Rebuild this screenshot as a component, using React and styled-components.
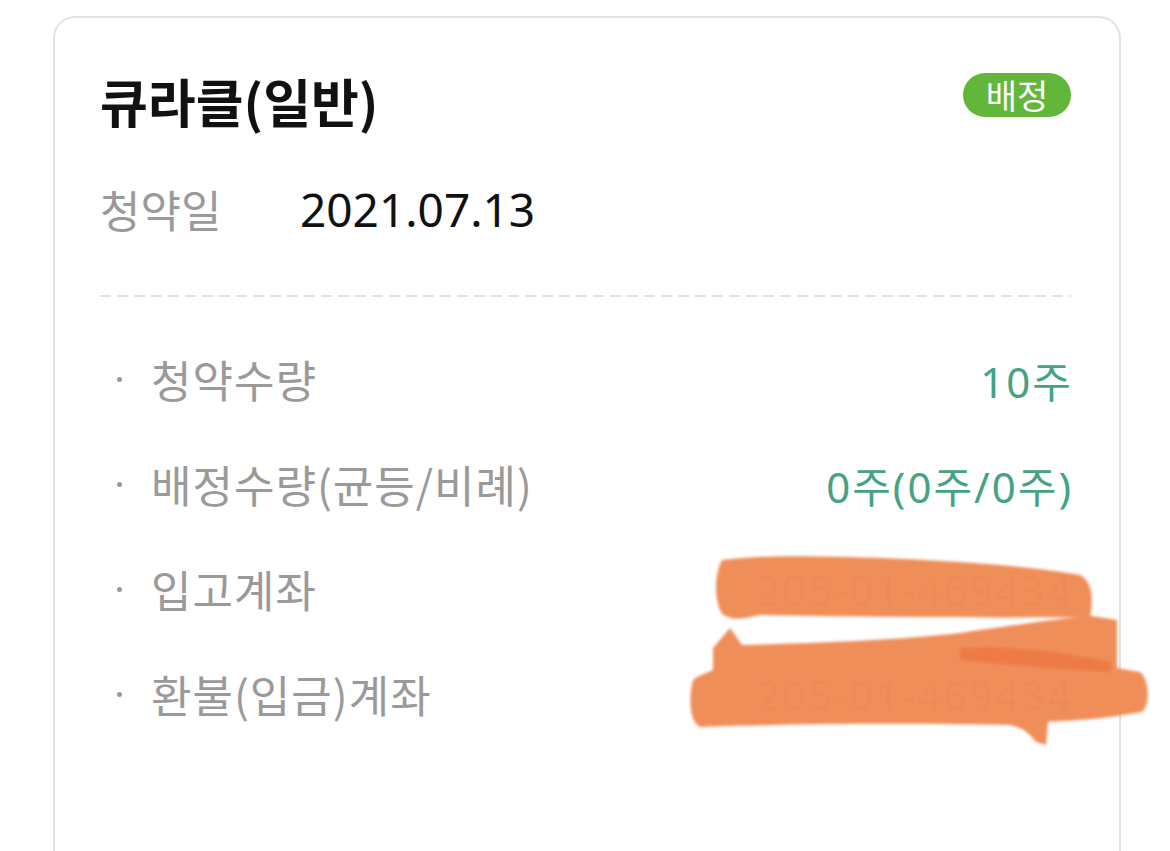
import React from "react";
import styled, { createGlobalStyle } from "styled-components";

const Global = createGlobalStyle`
  html, body { margin: 0; padding: 0; background: #ffffff; }
  body { font-family: "Noto Sans", "Noto Sans CJK KR", sans-serif; overflow: hidden; }
`;

const Page = styled.div`
  padding: 16px 49px 0 53px;
  height: 851px;
  box-sizing: border-box;
  overflow: hidden;
`;

const Card = styled.section`
  position: relative;
  border: 2px solid #e2e2e2;
  border-bottom: none;
  border-radius: 22px 22px 0 0;
  min-height: 900px;
  padding: 51px 48px 0 45px;
  box-sizing: border-box;
`;

const Header = styled.div`
  display: flex;
  justify-content: space-between;
  align-items: flex-start;
`;

const Title = styled.h1`
  margin: 0;
  font-family: "Noto Sans CJK KR", sans-serif;
  font-weight: 700;
  font-size: 52px;
  line-height: 64px;
  color: #111;
`;

const Badge = styled.span`
  margin-top: 4px;
  display: inline-flex;
  align-items: center;
  justify-content: center;
  width: 108px;
  height: 44px;
  border-radius: 22px;
  background: #62b73a;
  color: #fff;
  font-family: "Noto Sans CJK KR", sans-serif;
  font-size: 34px;
  line-height: 1;
`;

const DateRow = styled.div`
  display: flex;
  align-items: center;
  margin-top: 46px;
  height: 60px;
`;

const DateLabel = styled.span`
  width: 200px;
  font-family: "Noto Sans CJK KR", sans-serif;
  font-size: 44px;
  color: #9a9a9a;
`;

const DateValue = styled.span`
  font-family: "Noto Sans", "Noto Sans CJK KR", sans-serif;
  font-size: 46px;
  color: #111;
`;

const Divider = styled.div`
  margin-top: 56px;
  height: 2px;
  background-image: repeating-linear-gradient(
    to right,
    #e2e2e2 0,
    #e2e2e2 11px,
    transparent 11px,
    transparent 17px
  );
`;

const List = styled.ul`
  list-style: none;
  margin: 52px 0 0 0;
  padding: 0;
  display: flex;
  flex-direction: column;
  gap: 45px;
`;

const Row = styled.li`
  display: flex;
  justify-content: space-between;
  align-items: center;
  height: 60px;
`;

const Label = styled.span`
  display: flex;
  align-items: center;
  font-family: "Noto Sans CJK KR", sans-serif;
  font-size: 44px;
  letter-spacing: 1px;
  color: #9a9a9a;
  &::before {
    content: "";
    width: 5px;
    height: 5px;
    border-radius: 50%;
    background: #9a9a9a;
    margin: 0 29px 0 17px;
  }
`;

const Value = styled.span`
  font-family: "Noto Sans", "Noto Sans CJK KR", sans-serif;
  font-size: 42px;
  letter-spacing: 2px;
  margin-right: -2px;
  color: ${(p) => (p.$muted ? "#9c9c9c" : "#45a383")};
`;

const Scribble = styled.svg`
  position: absolute;
  left: -55px;
  top: -18px;
  width: 1170px;
  height: 851px;
  pointer-events: none;
`;

const rows = [
  { label: "청약수량", value: "10주" },
  { label: "배정수량(균등/비례)", value: "0주(0주/0주)" },
  { label: "입고계좌", value: "205-01-469434", muted: true },
  { label: "환불(입금)계좌", value: "205-01-469434", muted: true },
];

export default function App() {
  return (
    <>
      <Global />
      <Page>
        <Card>
          <Header>
            <Title>큐라클(일반)</Title>
            <Badge>배정</Badge>
          </Header>
          <DateRow>
            <DateLabel>청약일</DateLabel>
            <DateValue>2021.07.13</DateValue>
          </DateRow>
          <Divider />
          <List>
            {rows.map((r) => (
              <Row key={r.label}>
                <Label>{r.label}</Label>
                <Value $muted={r.muted}>{r.value}</Value>
              </Row>
            ))}
          </List>
          <Scribble viewBox="0 0 1170 851">
            <defs>
              <filter id="soft" x="-10%" y="-10%" width="120%" height="120%">
                <feGaussianBlur stdDeviation="1.8" />
              </filter>
            </defs>
            <g filter="url(#soft)">
              <path
                d="M 722 560 C 760 555 800 556 850 557 C 950 560 1030 566 1080 575 C 1094 582 1093 605 1090 617 C 1000 618 860 617 760 615 C 745 618 735 622 722 614 C 714 600 714 575 722 560 Z"
                fill="#ef8a55"
                opacity="0.97"
              />
              <path
                d="M 730 628 L 742 645 C 820 643 900 640 960 633 C 1010 626 1060 618 1092 616 L 1117 620 L 1117 668 L 1140 672 C 1150 680 1150 705 1142 712 L 1117 716 C 1090 720 1060 721 1048 722 L 1046 745 L 1036 742 C 1030 735 1025 728 1010 725 C 950 724 850 722 700 727 C 690 722 688 700 693 680 C 700 674 708 673 713 670 L 713 648 Z"
                fill="#ef8a55"
                opacity="0.97"
              />
              <path
                d="M 960 648 C 1010 645 1060 652 1112 662 L 1110 672 C 1060 670 1000 664 960 660 Z"
                fill="#e8672f"
                opacity="0.5"
              />
            </g>
          </Scribble>
        </Card>
      </Page>
    </>
  );
}
